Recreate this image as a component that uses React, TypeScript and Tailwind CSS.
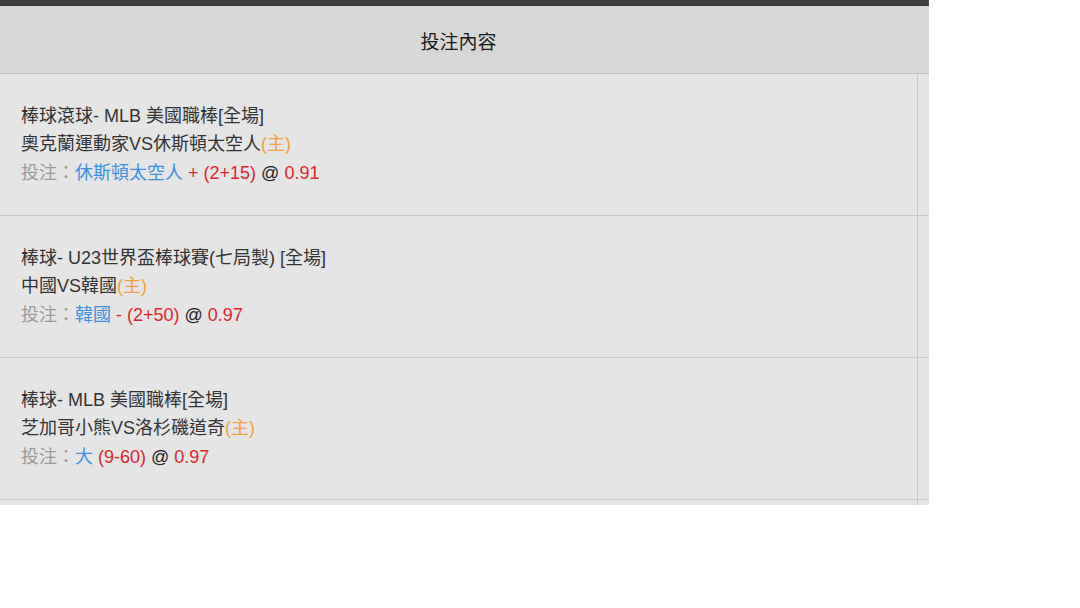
const bets = [
  {
    league: '棒球滾球- MLB 美國職棒[全場]',
    match: '奧克蘭運動家VS休斯頓太空人',
    pick: '休斯頓太空人',
    line: '+ (2+15)',
    odds: '0.91',
  },
  {
    league: '棒球- U23世界盃棒球賽(七局製) [全場]',
    match: '中國VS韓國',
    pick: '韓國',
    line: '- (2+50)',
    odds: '0.97',
  },
  {
    league: '棒球- MLB 美國職棒[全場]',
    match: '芝加哥小熊VS洛杉磯道奇',
    pick: '大',
    line: '(9-60)',
    odds: '0.97',
  },
];

const App = () => {
  return (
    <div className="w-[1080px] h-[608px] bg-white font-['Liberation_Sans','Noto_Sans_CJK_TC',sans-serif]">
      <div className="w-[929px] h-[505px] overflow-hidden bg-[#e5e5e5]">
        <div className="h-[6px] bg-[#404040]" />
        {/* Header */}
        <div className="grid grid-cols-[917px_12px] h-[68px] bg-[#d7d7d7] border-b border-[#c4c4c4]">
          <div className="flex items-center justify-center pt-[7px]">
            <span className="text-[19px] text-[#1a1a1a]">投注內容</span>
          </div>
          <div />
        </div>

        {bets.map((bet, index) => (
          <div key={index} className="grid grid-cols-[917px_12px] h-[142px] border-b border-[#cacaca]">
            <div className="flex flex-col justify-center pl-[21px] text-[18px] leading-[28.5px] text-[#333]">
              <div>{bet.league}</div>
              <div>
                {bet.match}
                <span className="text-[#f0a040]">(主)</span>
              </div>
              <div>
                <span className="text-[#9a9a9a]">投注：</span>
                <span className="text-[#3d8fe0]">{bet.pick}</span>{' '}
                <span className="text-[#e0242c]">{bet.line}</span>{' '}
                <span className="text-[#222]">@</span>{' '}
                <span className="text-[#e0242c]">{bet.odds}</span>
              </div>
            </div>
            <div className="border-l border-[#c8c8c8]" />
          </div>
        ))}
        <div className="grid grid-cols-[917px_12px] h-[142px]">
          <div />
          <div className="border-l border-[#c8c8c8]" />
        </div>
      </div>
    </div>
  );
};

export default App;
